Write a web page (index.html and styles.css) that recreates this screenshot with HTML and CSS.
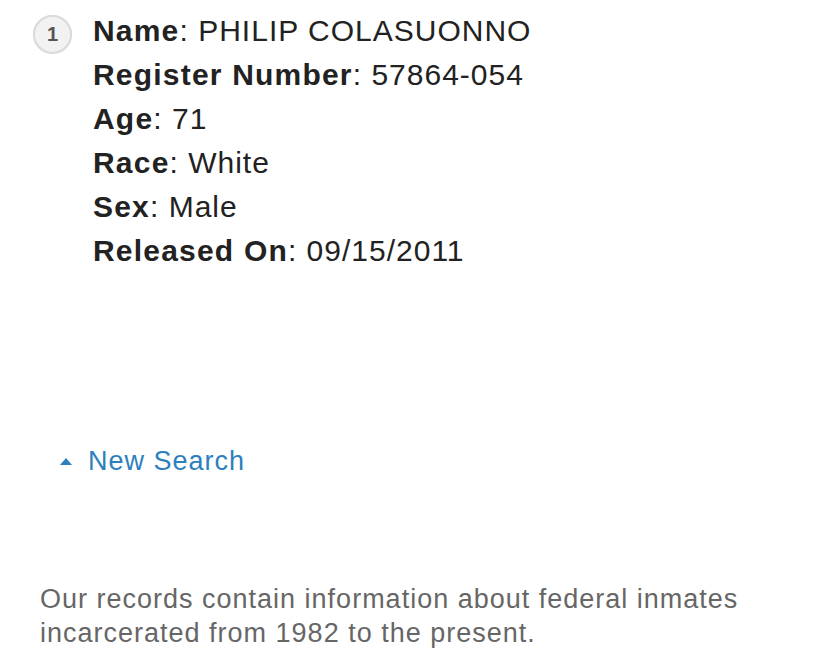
FILE: index.html
```html
<!DOCTYPE html>
<html>
<head>
<meta charset="utf-8">
<link rel="stylesheet" href="styles.css">
</head>
<body>
<div class="page">
  <div class="record">
    <div class="badge">1</div>
    <ul class="fields">
      <li><b>Name</b>: PHILIP COLASUONNO</li>
      <li><b>Register Number</b>: 57864-054</li>
      <li><b>Age</b>: 71</li>
      <li><b>Race</b>: White</li>
      <li><b>Sex</b>: Male</li>
      <li><b>Released On</b>: 09/15/2011</li>
    </ul>
  </div>
  <a class="new-search" href="#"><span class="tri"></span>New Search</a>
  <p class="note">Our records contain information about federal inmates incarcerated from 1982 to the present.</p>
</div>
</body>
</html>
```
FILE: styles.css
```css
html, body { margin: 0; padding: 0; background: #fff; }
body { font-family: "Liberation Sans", Arial, sans-serif; }
.page { padding: 9px 0 0 40px; width: 760px; }
.record { display: flex; align-items: flex-start; margin-left: -7px; }
.badge {
  width: 35px; height: 35px; border-radius: 50%;
  background: #f2f2f2; border: 2px solid #dadada;
  box-shadow: 0 0 1px #e6e6e6;
  color: #555; font-size: 20px; font-weight: bold;
  display: flex; align-items: center; justify-content: center;
  margin-top: 6px; flex: none;
}
.fields { list-style: none; margin: 0 0 0 21px; padding: 0; color: #222; font-size: 30px; line-height: 44px; letter-spacing: 1px; }
.fields b { font-weight: bold; letter-spacing: 1.2px; }
.new-search { display: flex; align-items: center; margin: 171px 0 0 20px; color: #2d7fbd; font-size: 27px; letter-spacing: 1px; text-decoration: none; line-height: 34px; }
.tri { width: 0; height: 0; border-left: 6px solid transparent; border-right: 6px solid transparent; border-bottom: 7px solid #2d7fbd; margin-right: 16px; }
.note { margin: 104px 0 0 0; color: #666; font-size: 27px; line-height: 34px; letter-spacing: 1px; }
```
